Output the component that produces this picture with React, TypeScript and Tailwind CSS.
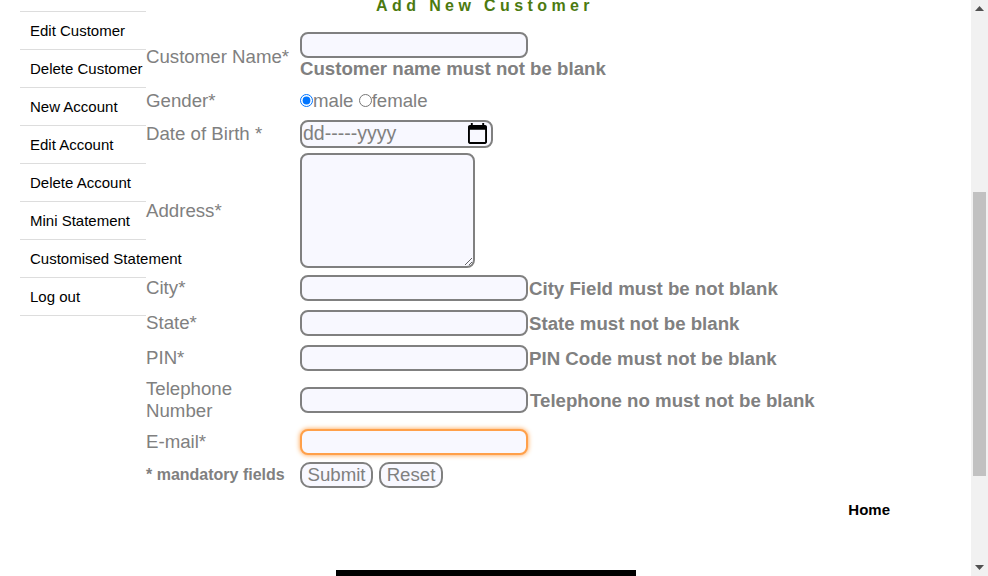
import { useEffect, useRef, ReactNode } from "react";

const menu = [
  "Manager",
  "New Customer",
  "Edit Customer",
  "Delete Customer",
  "New Account",
  "Edit Account",
  "Delete Account",
  "Mini Statement",
  "Customised Statement",
  "Log out",
];

const inputCls =
  "h-[26px] w-[228px] rounded-[8px] border-2 border-[#808080] bg-[#f8f8ff] px-1 text-[16px] outline-none";
const errCls = "font-bold text-[18.67px] leading-[21px] text-[#808080] whitespace-nowrap";

function Row({ label, h, top, children }: { label: string; h: string; top?: boolean; children: ReactNode }) {
  return (
    <div className={`flex items-center ${h}`}>
      <div className="w-[154px] shrink-0 text-[18.67px] leading-[22px] text-[#808080]">{label}</div>
      <div className={top ? "flex items-center self-start" : "flex items-center"}>{children}</div>
    </div>
  );
}

function CalendarIcon() {
  return (
    <svg width="19" height="21" viewBox="2 1 20 22" fill="black">
      <path d="M20 3h-1V1h-2v2H7V1H5v2H4c-1.1 0-2 .9-2 2v16c0 1.1.9 2 2 2h16c1.1 0 2-.9 2-2V5c0-1.1-.9-2-2-2zm0 18H4V8h16v13z" />
    </svg>
  );
}

// the browser's vertical scrollbar, page scrolled to 355 of 1099
function Scrollbar() {
  return (
    <div className="flex h-full w-[17px] shrink-0 flex-col bg-[#f1f1f1]">
      <div className="flex h-[17px] items-center justify-center">
        <svg width="9" height="5" viewBox="0 0 9 5" fill="#505050">
          <path d="M4.5 0L9 5H0z" />
        </svg>
      </div>
      <div className="flex-1">
        <div className="mx-[2px] mt-[175px] h-[284px] bg-[#c1c1c1]" />
      </div>
      <div className="flex h-[17px] items-center justify-center">
        <svg width="9" height="5" viewBox="0 0 9 5" fill="#505050">
          <path d="M0 0h9L4.5 5z" />
        </svg>
      </div>
    </div>
  );
}

export default function App() {
  const emailRef = useRef<HTMLInputElement>(null);
  const pageRef = useRef<HTMLDivElement>(null);

  useEffect(() => {
    emailRef.current?.focus({ preventScroll: true });
    if (pageRef.current) pageRef.current.scrollTop = 355;
  }, []);

  return (
    <div className="flex h-[576px] w-full overflow-hidden bg-white font-['Liberation_Sans',Arial,sans-serif]">
      <div ref={pageRef} className="h-full flex-1 overflow-hidden">
        <div className="min-h-[1099px]">
          {/* header, scrolled out of view */}
          <header className="h-[291px] px-5 pt-4">
            <div className="text-[28px] font-bold text-[#4c7a10]">Guru99 Bank</div>
            <div className="mt-4 flex gap-6 bg-[#4c7a10] px-4 py-2 text-[14px] text-white">
              <span>Selenium</span>
              <span>Insurance Project</span>
              <span>Agile Project</span>
              <span>Bank Project</span>
              <span>Security Project</span>
            </div>
          </header>

          <div className="flex items-start">
            <ul className="ml-5 w-[126px] shrink-0">
              {menu.map((m) => (
                <li key={m} className="border-b border-[#ddd]">
                  <a className="block whitespace-nowrap p-[10px] text-[15px] leading-[17px] text-black">{m}</a>
                </li>
              ))}
            </ul>

            <form className="pt-[61px]" onSubmit={(e) => e.preventDefault()}>
              <p className="h-[35px] pl-[230px] text-[16px] font-bold leading-[18px] tracking-[4.4px] text-[#4c7a10]">
                Add New Customer
              </p>

              <Row label="Customer Name*" h="h-[50px]" top>
                <div className="flex flex-col">
                  <input className={inputCls} />
                  <span className={errCls}>Customer name must not be blank</span>
                </div>
              </Row>

              <Row label="Gender*" h="h-[37px]">
                <label className="flex items-center text-[18.67px] leading-[21px] text-[#808080]">
                  <input type="radio" name="rad1" defaultChecked className="m-0 h-[13px] w-[13px]" />
                  male&nbsp;
                  <input type="radio" name="rad1" className="m-0 h-[13px] w-[13px]" />
                  female
                </label>
              </Row>

              <Row label="Date of Birth *" h="h-[29px]">
                <div className="flex h-[28px] w-[193px] items-center justify-between rounded-[8px] border-2 border-[#808080] bg-[#f8f8ff] pl-[1px] pr-[4px]">
                  <span className="text-[19.5px] leading-[21px] text-[#808080]">dd-----yyyy</span>
                  <CalendarIcon />
                </div>
              </Row>

              <Row label="Address*" h="h-[125px]">
                <textarea className="h-[115px] w-[175px] resize rounded-[8px] border-2 border-[#808080] bg-[#f8f8ff] outline-none" />
              </Row>

              <Row label="City*" h="h-[30px]">
                <input className={inputCls} />
                <span className={`${errCls} ml-[1px]`}>City Field must be not blank</span>
              </Row>

              <Row label="State*" h="h-[40px]">
                <input className={inputCls} />
                <span className={`${errCls} ml-[1px]`}>State must not be blank</span>
              </Row>

              <Row label="PIN*" h="h-[30px]">
                <input className={inputCls} />
                <span className={`${errCls} ml-[1px]`}>PIN Code must not be blank</span>
              </Row>

              <Row label="Telephone Number" h="h-[54px]">
                <input className={inputCls} />
                <span className={`${errCls} ml-[2px]`}>Telephone no must not be blank</span>
              </Row>

              <Row label="E-mail*" h="h-[30px]">
                <input
                  ref={emailRef}
                  className="h-[26px] w-[228px] rounded-[8px] border-2 border-[#ffa04a] bg-[#f8f8ff] px-[1px] text-[16px] caret-black shadow-[0_0_5px_#ff9a3c] outline-none"
                />
              </Row>

              <div className="flex h-[36px] items-center">
                <div className="w-[154px] shrink-0 text-[16px] font-bold text-[#808080]">* mandatory fields</div>
                <div className="flex gap-[6px]">
                  <button className="h-[26px] w-[73px] rounded-[10px] border-2 border-[#808080] bg-[#f8f8ff] text-[18.67px] leading-none text-[#808080]">
                    Submit
                  </button>
                  <button
                    type="reset"
                    className="h-[26px] w-[64px] rounded-[10px] border-2 border-[#808080] bg-[#f8f8ff] text-[18.67px] leading-none text-[#808080]"
                  >
                    Reset
                  </button>
                </div>
              </div>
            </form>
          </div>

          <div className="mt-2 flex justify-end pr-[81px]">
            <a className="text-[15px] font-bold leading-[17px] text-black">Home</a>
          </div>

          <div className="ml-[336px] mt-[52px] h-[90px] w-[300px] bg-black" />
        </div>
      </div>
      <Scrollbar />
    </div>
  );
}
